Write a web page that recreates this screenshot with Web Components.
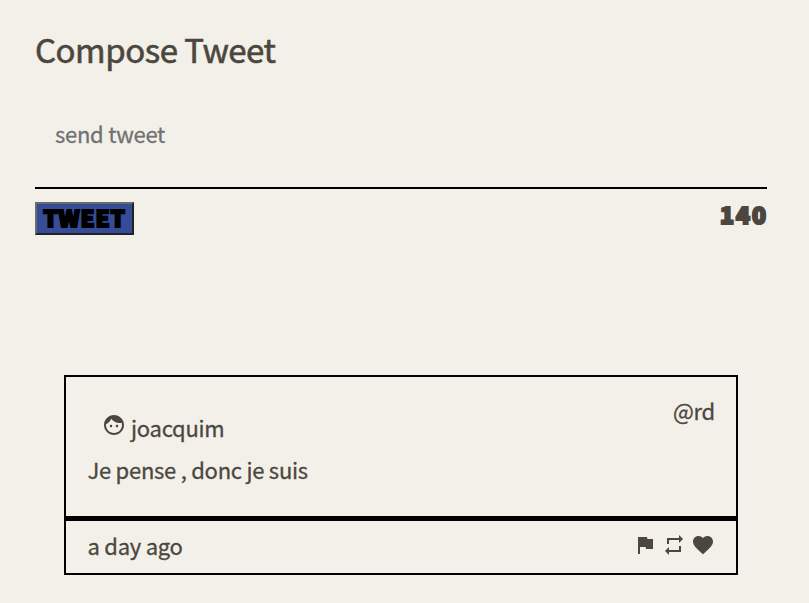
<!DOCTYPE html>
<html lang="en">
<head>
<meta charset="utf-8">
<title>Compose Tweet</title>
<style>
body { margin: 0; background: #f3f0e9; color: #4b473f; font: 400 22px/32px "Noto Sans CJK JP", "Noto Sans CJK SC", sans-serif; letter-spacing: -.26px; -webkit-text-stroke: .3px currentColor; }
</style>
</head>
<body>
<tweet-app></tweet-app>
<script>
const define = (name, html) => customElements.define(name, class extends HTMLElement {
  constructor() {
    super();
    const t = document.createElement('template');
    t.innerHTML = html;
    this.attachShadow({ mode: 'open' }).appendChild(t.content.cloneNode(true));
  }
});
const icon = (name, path) => define(name, `<style>:host{display:block;width:24px;height:24px}svg{display:block;fill:currentColor}</style>
<svg width="24" height="24" viewBox="0 0 24 24"><path d="${path}"/></svg>`);

icon('icon-face', 'M9 11.75c-.69 0-1.25.56-1.25 1.25s.56 1.25 1.25 1.25 1.25-.56 1.25-1.25-.56-1.25-1.25-1.25zm6 0c-.69 0-1.25.56-1.25 1.25s.56 1.25 1.25 1.25 1.25-.56 1.25-1.25-.56-1.25-1.25-1.25zM12 2C6.48 2 2 6.48 2 12s4.48 10 10 10 10-4.48 10-10S17.52 2 12 2zm0 18c-4.41 0-8-3.59-8-8 0-.29.02-.58.05-.86 2.36-1.05 4.23-2.98 5.21-5.37C11.07 8.33 14.05 10 17.42 10c.78 0 1.53-.09 2.25-.26.21.71.33 1.47.33 2.26 0 4.41-3.59 8-8 8z');
icon('icon-flag', 'M14.4 6L14 4H5v17h2v-7h5.6l.4 2h7V6z');
icon('icon-repeat', 'M7 7h10v3l4-4-4-4v3H5v6h2V7zm10 10H7v-3l-4 4 4 4v-3h12v-6h-2v4z');
icon('icon-heart', 'M12 21.35l-1.45-1.32C5.4 15.36 2 12.28 2 8.5 2 5.42 4.42 3 7.5 3c1.74 0 3.41.81 4.5 2.09C13.09 3.81 14.76 3 16.5 3 19.58 3 22 5.42 22 8.5c0 3.78-3.4 6.86-8.55 11.54L12 21.35z');

define('tweet-button', `<style>
:host{display:block}
button{box-sizing:border-box;display:flex;align-items:center;justify-content:center;width:99px;height:33px;padding:0 0 3px;background:#364c98;color:#000;border:2px solid;border-color:#6b6b6b #222 #222 #6b6b6b;
font:900 22.5px/26px "Noto Sans CJK JP",sans-serif;letter-spacing:.9px;-webkit-text-stroke:2px #000}
</style><button><slot></slot></button>`);

define('char-counter', `<style>
:host{display:block;font:900 23px/24px "Noto Sans CJK JP",sans-serif;letter-spacing:2px;margin-right:-1px;-webkit-text-stroke:2.2px currentColor}
</style><slot></slot>`);

define('tweet-composer', `<style>
:host{display:block;padding:29px 42px 0 35px}
h2{margin:0;font-weight:400;font-size:33px;line-height:40px;letter-spacing:-.48px;-webkit-text-stroke:.6px currentColor}
textarea{display:block;box-sizing:border-box;width:100%;height:95px;margin:25px 0 0;padding:23px 20px;border:0;border-bottom:2px solid #000;background:none;resize:none;overflow:hidden;outline:0;font:inherit;letter-spacing:inherit;color:inherit}
textarea::placeholder{color:#717171;opacity:1}
.bar{display:flex;justify-content:space-between;padding-top:13px}
</style>
<h2>Compose Tweet</h2>
<textarea placeholder="send tweet"></textarea>
<div class="bar"><tweet-button>TWEET</tweet-button><char-counter>140</char-counter></div>`);

define('tweet-card', `<style>
:host{display:block;box-sizing:border-box;width:674px;height:200px;border:2px solid #000}
header{box-sizing:border-box;display:flex;justify-content:space-between;height:66px;padding:17px 21px 0 36px}
.user{display:flex;gap:5px;padding-top:17px}
icon-face{margin-top:2px}
p{box-sizing:border-box;margin:0;padding:10px 22px 0 21.5px;height:73px}
footer{display:flex;justify-content:space-between;border-top:5px solid #000;padding:8px 21px 0 21.5px}
.actions{display:flex;gap:5px;padding-top:4px}
</style>
<header><div class="user"><icon-face></icon-face><slot name="user"></slot></div><slot name="handle"></slot></header>
<p><slot></slot></p>
<footer><slot name="time"></slot><div class="actions"><icon-flag></icon-flag><icon-repeat></icon-repeat><icon-heart></icon-heart></div></footer>`);

define('tweet-app', `<style>
:host{display:block;height:603px;overflow:hidden}
tweet-card{margin:140px 0 0 64px}
</style>
<tweet-composer></tweet-composer>
<tweet-card><span slot="user">joacquim</span><span slot="handle">@rd</span>Je pense , donc je suis<span slot="time">a day ago</span></tweet-card>`);
</script>
</body>
</html>
